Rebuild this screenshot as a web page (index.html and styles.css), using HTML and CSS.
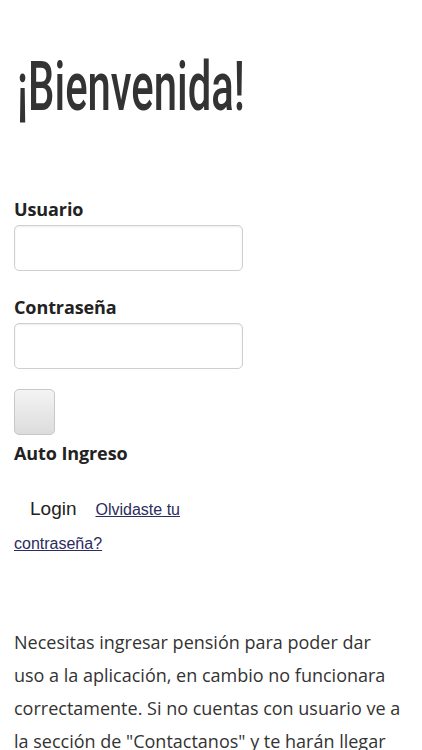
FILE: index.html
```html
<!DOCTYPE html>
<html lang="es">
<head>
<meta charset="utf-8">
<title>Bienvenida</title>
<link rel="stylesheet" href="styles.css">
</head>
<body>
<main class="page">
  <h1 class="title"><span class="title-text">¡Bienvenida!</span></h1>
  <form class="form">
    <label class="field-label" for="user">Usuario</label>
    <input class="field-input" id="user" type="text">
    <label class="field-label" for="pass">Contraseña</label>
    <input class="field-input" id="pass" type="password">
    <div class="check-box"></div>
    <div class="check-label">Auto Ingreso</div>
    <div class="actions">
      <span class="login">Login</span><a class="forgot" href="#">Olvidaste tu</a>
    </div>
    <a class="forgot forgot-2" href="#">contraseña?</a>
  </form>
  <p class="note">Necesitas ingresar pensión para poder dar uso a la aplicación, en cambio no funcionara correctamente. Si no cuentas con usuario ve a la sección de "Contactanos" y te harán llegar</p>
</main>
</body>
</html>
```
FILE: styles.css
```css
html, body {
  margin: 0;
  padding: 0;
  background: #ffffff;
}
body {
  overflow: hidden;
  height: 750px;
}
.page {
  padding: 0 14px;
  font-family: "Open Sans", "DejaVu Sans", sans-serif;
  color: #2e2e2e;
}
.title {
  margin: 0;
  padding-top: 50px;
  height: 84px;
  font-family: Roboto, "Liberation Sans", sans-serif;
  font-weight: 500;
  font-size: 68px;
  line-height: 74px;
  color: #333333;
  white-space: nowrap;
}
.title-text {
  display: inline-block;
  transform: scaleX(0.615);
  transform-origin: left center;
  margin-left: 3px;
}
.form {
  display: flex;
  flex-direction: column;
  align-items: flex-start;
  margin-top: 62px;
}
.field-label {
  font-weight: 700;
  font-size: 18px;
  line-height: 26px;
  letter-spacing: -0.1px;
  color: #222;
}
.field-input {
  box-sizing: border-box;
  width: 229px;
  height: 46px;
  margin: 3px 0 23px;
  border: 1px solid #cfcfcf;
  border-radius: 5px;
  box-shadow: inset 0 1px 2px rgba(0,0,0,0.08);
  background: #fff;
}
.field-input + .field-label + .field-input {
  margin-bottom: 25px;
}
.check-box {
  box-sizing: border-box;
  width: 41px;
  height: 46px;
  margin-top: -5px;
  border: 1px solid #c8c8c8;
  border-radius: 5px;
  background: linear-gradient(#f4f4f4, #dcdcdc);
}
.check-label {
  font-weight: 700;
  font-size: 18px;
  line-height: 26px;
  letter-spacing: -0.1px;
  margin-top: 5px;
  color: #222;
}
.actions {
  display: flex;
  align-items: baseline;
  margin-top: 32px;
  padding-left: 16px;
}
.login {
  font-family: "Liberation Sans", Arial, sans-serif;
  font-size: 19px;
  color: #222;
  margin-right: 19px;
}
.forgot {
  font-family: "Liberation Sans", Arial, sans-serif;
  font-size: 16px;
  color: #2c2c5e;
  text-decoration: underline;
}
.forgot-2 {
  margin-top: 15px;
}
.note {
  width: 389px;
  margin: 73px 0 0;
  font-size: 18px;
  line-height: 33px;
  color: #333;
}
```
